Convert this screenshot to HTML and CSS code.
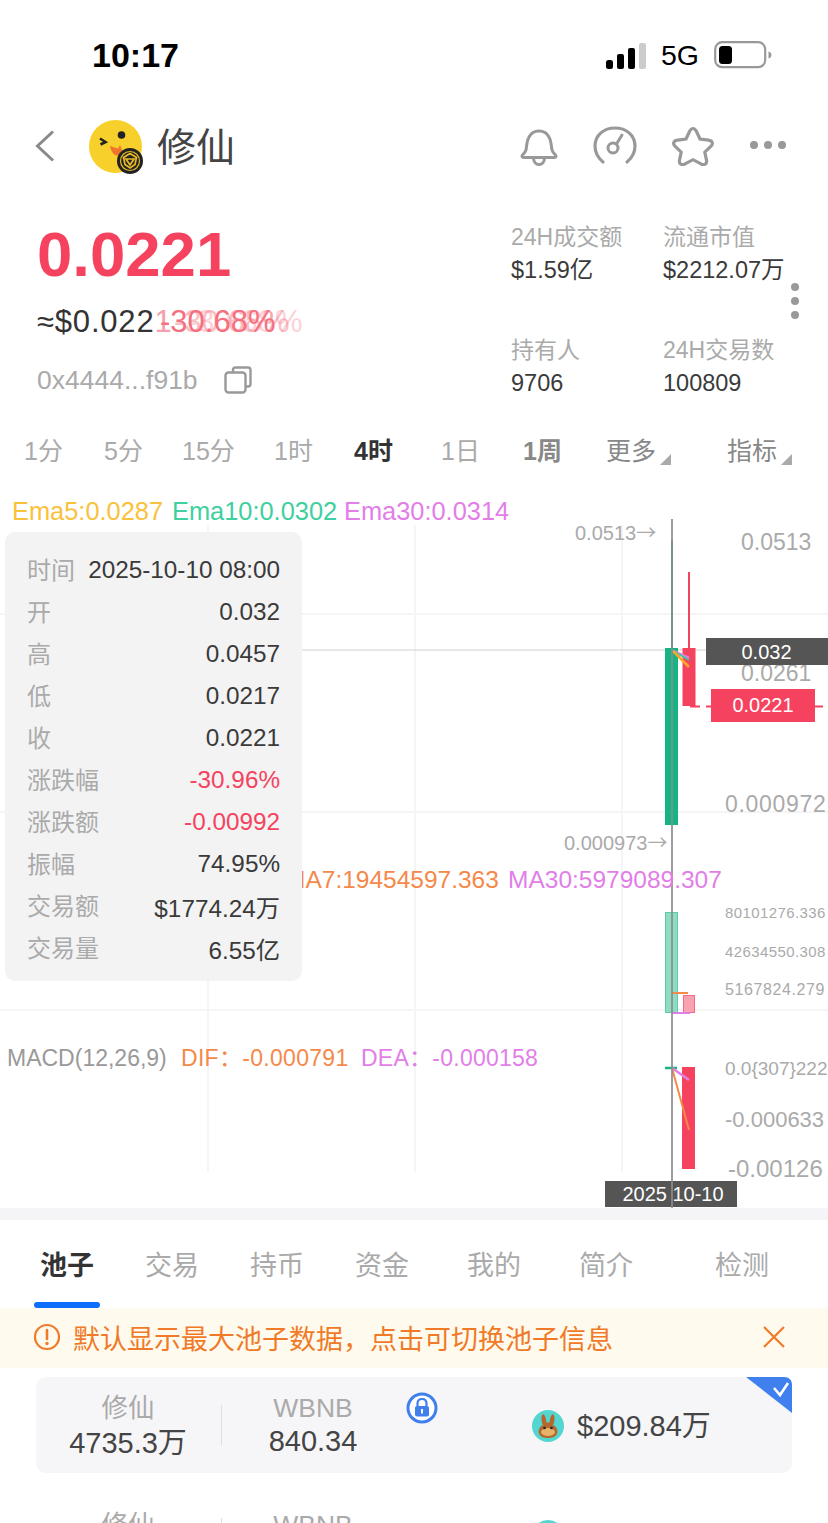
FILE: index.html
```html
<!DOCTYPE html>
<html lang="zh">
<head>
<meta charset="utf-8">
<title>修仙</title>
<link rel="stylesheet" href="styles.css">
</head>
<body>
<div class="page">
  <div class="status">
    <span class="time">10:17</span>
    <div class="status-right">
      <svg class="signal" viewBox="0 0 42 26" width="42" height="26"><rect x="0" y="17" width="7" height="9" rx="2.5" fill="#000"/><rect x="11" y="11" width="7" height="15" rx="2" fill="#000"/><rect x="22" y="5" width="7" height="21" rx="2" fill="#000"/><rect x="33" y="0" width="7" height="26" rx="2" fill="#ccc"/></svg>
      <span class="net">5G</span>
      <svg class="battery" viewBox="0 0 58 28" width="58" height="28"><rect x="1.2" y="1.2" width="50" height="25" rx="7" fill="#fff" stroke="#999" stroke-width="2.2"/><rect x="5" y="5" width="13" height="18" rx="3.5" fill="#000"/><path d="M54.5 10.5c2 .6 3 2 3 3.5s-1 3-3 3.500z" fill="#999"/></svg>
    </div>
  </div>

  <div class="nav">
    <svg class="back" viewBox="0 0 20 32" width="20" height="32"><path d="M18 1.500 2.500 16 18 30.500" fill="none" stroke="#8a8a8a" stroke-width="3"/></svg>
    <svg class="avatar" viewBox="0 0 54 54" width="54" height="54">
      <ellipse cx="26.500" cy="26.500" rx="26.500" ry="26.500" fill="#f8d02c"/>
      <circle cx="32.500" cy="15" r="3.800" fill="#222"/>
      <path d="M11 18.500l5.500 3.500-5 2.500" fill="none" stroke="#222" stroke-width="2.600"/>
      <path d="M21 26l8 2.500 2-3.500 2 5-4 5.500c-4 .5-7-4-8-9.500z" fill="#f0752a"/>
      <circle cx="41" cy="41" r="13" fill="#222"/>
      <circle cx="41" cy="41" r="9.500" fill="none" stroke="#e8b923" stroke-width="1.200"/>
      <path d="M41 33.500l6.500 4-1.500 7-5 3.500-5-3.500-1.500-7zM37 39h8l-4 6z" fill="none" stroke="#e8b923" stroke-width="1.700"/>
    </svg>
    <span class="title">修仙</span>
    <div class="nav-icons">
      <svg viewBox="0 0 40 40" width="40" height="40"><path d="M3 30c0-1 3-3 4-6 1-4 0-8 3-13 2-4 6-6 10-6s8 2 10 6c3 5 2 9 3 13 1 3 4 5 4 6 0 1-1 1.500-2 1.500H5c-1 0-2-.5-2-1.500z" fill="none" stroke="#999" stroke-width="3"/><path d="M14.500 32c0 4 2.500 6.500 5.500 6.500s5.500-2.500 5.500-6.500" fill="none" stroke="#999" stroke-width="3"/></svg>
      <svg viewBox="0 0 44 40" width="44" height="40"><path d="M10 36C4 31 2 26 2 20 2 9 11 2 22 2s20 7 20 18c0 6-2 11-8 16" fill="none" stroke="#999" stroke-width="3.200" stroke-linecap="round"/><circle cx="20" cy="22" r="5" fill="none" stroke="#999" stroke-width="3"/><path d="M23.500 18 29 9" stroke="#999" stroke-width="3" stroke-linecap="round"/></svg>
      <svg viewBox="0 0 44 40" width="44" height="40"><path d="M22 2.500c1.500 0 2.500 1 3.500 3l3.500 7.500 8.500 1.200c4 .6 5 3.500 2.500 6l-6.200 6 1.700 8c.7 3.500-2 5.500-5 4l-8.500-4.500-8.500 4.500c-3 1.500-5.700-.5-5-4l1.700-8-6.200-6c-2.500-2.500-1.500-5.400 2.500-6l8.500-1.200 3.500-7.500c1-2 2-3 3.500-3z" fill="none" stroke="#999" stroke-width="3.200"/></svg>
      <svg viewBox="0 0 38 10" width="38" height="10"><circle cx="5" cy="5" r="4" fill="#999"/><circle cx="19" cy="5" r="4" fill="#999"/><circle cx="33" cy="5" r="4" fill="#999"/></svg>
    </div>
  </div>

  <div class="summary">
    <div class="quote">
      <div class="price">0.0221</div>
      <div class="usd-row">
        <span class="usd">≈$0.022<span class="fade">1</span></span>
        <span class="change">-30.68%<span class="ghost ghost-a">-30.68%</span><span class="ghost ghost-b">-30.68%</span></span>
      </div>
      <div class="addr">
        <span>0x4444...f91b</span>
        <svg viewBox="0 0 28 28" width="28" height="28"><path d="M9 6V4c0-1.500 1-2.500 2.500-2.500H24c1.500 0 2.500 1 2.500 2.500v14c0 1.500-1 2.500-2.500 2.500h-2" fill="none" stroke="#999" stroke-width="2.400"/><rect x="1.500" y="6.500" width="20" height="20" rx="3" fill="none" stroke="#999" stroke-width="2.400"/></svg>
      </div>
    </div>
    <div class="stats">
      <div class="stat"><span class="stat-label">24H成交额</span><span class="stat-value">$1.59亿</span></div>
      <div class="stat"><span class="stat-label">流通市值</span><span class="stat-value">$2212.07万</span></div>
      <div class="stat"><span class="stat-label">持有人</span><span class="stat-value">9706</span></div>
      <div class="stat"><span class="stat-label">24H交易数</span><span class="stat-value">100809</span></div>
      <div class="vdots"><i></i><i></i><i></i></div>
    </div>
  </div>

  <div class="tf">
    <span>1分</span><span>5分</span><span>15分</span><span>1时</span>
    <span class="tf-on">4时</span><span>1日</span><span class="tf-mid">1周</span>
    <span class="tf-more">更多</span><span class="tf-more">指标</span>
  </div>

  <div class="chart">
    <svg class="plot" viewBox="0 490 828 718" width="828" height="718">
      <g stroke="#f5f5f6" stroke-width="2">
        <path d="M0 614H828M0 812H828M0 1010H828"/>
        <path d="M208 525V1172M415 525V1172M622 525V1172"/>
      </g>
      <path d="M302 650H706" stroke="#cfcfcf" stroke-width="1"/>
      <!-- candles -->
      <rect x="671" y="540" width="2" height="108" fill="#14b585"/>
      <rect x="665" y="648" width="13" height="177" fill="#14b585"/>
      <rect x="688" y="572" width="2" height="134" fill="#f5435f"/>
      <rect x="682.500" y="648" width="13" height="58" fill="#f5435f"/>
      <path d="M673 651 689 658" stroke="#e27ee8" stroke-width="2.500"/>
      <path d="M673 651 689 660" stroke="#3fc79a" stroke-width="2"/>
      <path d="M673 651 689 667" stroke="#f9a825" stroke-width="2.500"/>
      <path d="M690 706.500H700M706 706.500H711M815 706.500H823" stroke="#f5435f" stroke-width="2"/>
      <!-- volume -->
      <rect x="665.500" y="912.500" width="12" height="100" fill="#8fdcc4" stroke="#5ecba8"/>
      <rect x="683.500" y="995.500" width="11" height="17" fill="#f9a3b0" stroke="#f26a85"/>
      <path d="M672 993H688" stroke="#f5894a" stroke-width="2"/>
      <path d="M672 1013H690" stroke="#e27ee8" stroke-width="2"/>
      <!-- macd -->
      <rect x="682" y="1067" width="13" height="102" fill="#f5435f"/>
      <path d="M665 1068H677" stroke="#14b585" stroke-width="2.500"/>
      <path d="M672 1068 689 1080" stroke="#e27ee8" stroke-width="2.500"/>
      <path d="M672 1068 689 1130" stroke="#f5894a" stroke-width="2"/>
      <rect x="605" y="1181" width="132" height="26" fill="#555"/>
      <path d="M672 519V1208" stroke="#8c8c8c" stroke-opacity=".85" stroke-width="2"/>
    </svg>

    <span class="lbl ema ema5">Ema5:0.0287</span>
    <span class="lbl ema ema10">Ema10:0.0302</span>
    <span class="lbl ema ema30">Ema30:0.0314</span>

    <span class="lbl tick hi-mark">0.0513<span class="arrow">→</span></span>
    <span class="lbl tick lo-mark">0.000973<span class="arrow">→</span></span>
    <span class="lbl axis ax-a">0.0513</span>
    <span class="lbl axis ax-b">0.0261</span>
    <span class="lbl axis ax-c">0.000972</span>
    <span class="lbl tag tag-open">0.032</span>
    <span class="lbl tag tag-close">0.0221</span>

    <span class="lbl ma ma7">MA7:19454597.363</span>
    <span class="lbl ma ma30">MA30:5979089.307</span>
    <span class="lbl vol vol-a">80101276.336</span>
    <span class="lbl vol vol-b">42634550.308</span>
    <span class="lbl vol vol-c">5167824.279</span>

    <span class="lbl macd macd-name">MACD(12,26,9)</span>
    <span class="lbl macd macd-dif">DIF：-0.000791</span>
    <span class="lbl macd macd-dea">DEA：-0.000158</span>
    <span class="lbl axis m-a">0.0{307}222</span>
    <span class="lbl axis m-b">-0.000633</span>
    <span class="lbl axis m-c">-0.00126</span>
    <span class="lbl date">2025 10-10</span>

    <div class="tip">
      <div class="tip-row"><span>时间</span><b>2025-10-10 08:00</b></div>
      <div class="tip-row"><span>开</span><b>0.032</b></div>
      <div class="tip-row"><span>高</span><b>0.0457</b></div>
      <div class="tip-row"><span>低</span><b>0.0217</b></div>
      <div class="tip-row"><span>收</span><b>0.0221</b></div>
      <div class="tip-row"><span>涨跌幅</span><b class="neg">-30.96%</b></div>
      <div class="tip-row"><span>涨跌额</span><b class="neg">-0.00992</b></div>
      <div class="tip-row"><span>振幅</span><b>74.95%</b></div>
      <div class="tip-row"><span>交易额</span><b>$1774.24万</b></div>
      <div class="tip-row"><span>交易量</span><b>6.55亿</b></div>
    </div>
  </div>

  <div class="band"></div>

  <div class="tabs">
    <span class="tab-on">池子</span><span>交易</span><span>持币</span><span>资金</span><span>我的</span><span>简介</span><span>检测</span>
  </div>

  <div class="notice">
    <svg viewBox="0 0 28 28" width="28" height="28"><circle cx="14" cy="14" r="12" fill="none" stroke="#f07a28" stroke-width="2.200"/><path d="M14 7v9" stroke="#f07a28" stroke-width="2.600" stroke-linecap="round"/><circle cx="14" cy="20.500" r="1.700" fill="#f07a28"/></svg>
    <span class="notice-text">默认显示最大池子数据，点击可切换池子信息</span>
    <svg class="notice-x" viewBox="0 0 24 24" width="24" height="24"><path d="M2 2 22 22M22 2 2 22" stroke="#f07a28" stroke-width="2.200"/></svg>
  </div>

  <div class="pool pool-on">
    <div class="pool-col pool-a"><span class="pool-name">修仙</span><span class="pool-num">4735.3万</span></div>
    <div class="pool-div"></div>
    <div class="pool-col pool-b"><span class="pool-name">WBNB</span><span class="pool-num pool-num-b">840.34</span></div>
    <svg class="lock" viewBox="0 0 32 32" width="32" height="32"><circle cx="16" cy="16" r="14" fill="#fff" stroke="#3f7fee" stroke-width="3"/><path d="M11.500 14v-2.500c0-3 2-4.500 4.500-4.500s4.500 1.500 4.500 4.500V14" fill="none" stroke="#3f7fee" stroke-width="2.200"/><rect x="9" y="14" width="14" height="10.500" rx="2" fill="#3f7fee"/><rect x="15" y="17" width="2" height="4.500" fill="#fff"/></svg>
    <div class="pool-value">
      <svg viewBox="0 0 32 32" width="32" height="32"><circle cx="16" cy="16" r="16" fill="#53d6d0"/><path d="M11 15c-2-4-2-9-.5-10.500 2-1 3.500 3 4 8h3c.5-5 2-9 4-8 1.500 1.500 1.500 6.500-.5 10.500 3 1.500 4.500 4 4.500 6.500 0 4.500-4.500 6.500-9.500 6.500s-9.500-2-9.500-6.500c0-2.500 1.500-5 4.500-6.500z" fill="#b5682e"/><ellipse cx="16" cy="22" rx="7" ry="4" fill="#e8b26a"/><circle cx="12.500" cy="18" r="1.300" fill="#222"/><circle cx="19.500" cy="18" r="1.300" fill="#222"/></svg>
      <span>$209.84万</span>
    </div>
    <svg class="corner" viewBox="0 0 46 36" width="46" height="36"><path d="M0 0H38c5 0 8 3 8 8V36z" fill="#3f7fee"/><path d="M28 11l6 7 8-12" fill="none" stroke="#fff" stroke-width="2.600"/></svg>
  </div>

  <div class="pool pool-next">
    <div class="pool-col pool-a"><span class="pool-name">修仙</span></div>
    <div class="pool-div"></div>
    <div class="pool-col pool-b"><span class="pool-name">WBNB</span></div>
    <div class="pool-value pool-value-next"><svg viewBox="0 0 32 32" width="32" height="32"><circle cx="16" cy="16" r="16" fill="#53d6d0"/></svg></div>
  </div>
</div>
</body>
</html>
```
FILE: styles.css
```css
* { box-sizing: border-box; }
html, body { margin: 0; padding: 0; background: #fff; }
body { font-family: "Liberation Sans", "Noto Sans CJK SC", sans-serif; }
.page { width: 828px; height: 1523px; overflow: hidden; background: #fff; }

/* status bar */
.status { height: 110px; display: flex; align-items: center; padding: 0 56px 0 92px; justify-content: space-between; }
.time { font-size: 34px; font-weight: 700; color: #000; }
.status-right { display: flex; align-items: center; }
.signal { margin-right: 13px; margin-top: 2px; }
.net { font-size: 28.500px; color: #000; margin-right: 15px; }
.battery { display: block; }

/* nav */
.nav { height: 72px; display: flex; align-items: center; padding: 0 41px 0 35px; }
.back { margin-right: 34px; }
.avatar { margin-right: 14px; margin-top: 1px; }
.title { font-size: 39px; color: #444; margin-bottom: 4px; }
.nav-icons { margin-left: auto; display: flex; align-items: center; gap: 35px; }
.nav-icons svg:nth-child(2) { margin-left: -1px; }
.nav-icons svg:nth-child(3) { margin-left: -1px; }
.nav-icons svg:nth-child(4) { margin-left: -1px; margin-top: -2px; }

/* summary */
.summary { height: 232px; display: flex; justify-content: space-between; padding-left: 37px; position: relative; }
.quote { display: flex; flex-direction: column; }
.price { font-size: 63.500px; line-height: 72px; font-weight: 700; color: #f5435f; margin-top: 36px; }
.usd-row { display: flex; height: 40px; line-height: 40px; font-size: 31px; margin-top: 12px; }
.usd { color: #333; width: 123px; white-space: nowrap; letter-spacing: .8px; }
.fade { color: #f5a0ac; }
.change { position: relative; color: #f5707f; white-space: nowrap; }
.ghost { position: absolute; top: 0; left: 0; opacity: .45; }
.ghost-a { left: 14px; }
.ghost-b { left: 27px; opacity: .3; }
.addr { display: flex; align-items: center; margin-top: 23px; font-size: 26.500px; color: #aaa; gap: 25px; height: 30px; }
.addr span { width: 162px; white-space: nowrap; }
.stats { width: 317px; display: grid; grid-template-columns: 152px 152px; grid-auto-rows: 113px; padding-top: 41px; position: relative; }
.stat { display: flex; flex-direction: column; gap: 5px; white-space: nowrap; }
.stat-label { font-size: 23px; line-height: 28px; color: #aaa; }
.stat-value { font-size: 23.500px; line-height: 28px; color: #3a3a3a; }
.vdots { position: absolute; right: 29px; top: 101px; display: flex; flex-direction: column; gap: 6px; }
.vdots i { display: block; width: 8px; height: 8px; border-radius: 50%; background: #999; }

/* timeframe */
.tf { height: 76px; padding-bottom: 6px; display: grid; grid-template-columns: 80px 78px 92px 80px 87px 82px 83px 121px auto; align-items: center; padding-left: 24px; font-size: 25px; color: #aaa; }
.tf-on { color: #333; font-weight: 700; }
.tf-mid { color: #888; font-weight: 700; }
.tf-more { position: relative; color: #888; }
.tf-more::after { content: ""; position: absolute; left: 54px; bottom: 2px; border-style: solid; border-width: 0 0 11px 11px; border-color: transparent transparent #aaa transparent; }

/* chart: free canvas, every mark sits at its data position */
.chart { position: relative; height: 718px; overflow: hidden; }
.plot { position: absolute; left: 0; top: 0; display: block; }
.lbl { position: absolute; transform: translateY(-50%); white-space: nowrap; line-height: 1.2; }
.ema { font-size: 25.400px; top: 21px; }
.ema5 { left: 12px; color: #f9c23c; }
.ema10 { left: 172px; color: #3fd0a0; }
.ema30 { left: 344px; color: #e27ee8; }
.tick { font-size: 20px; color: #aaa; }
.arrow { font-family: "Noto Sans CJK SC", sans-serif; font-size: 20px; line-height: 1; }
.hi-mark { left: 575px; top: 43px; }
.lo-mark { left: 564px; top: 353px; }
.axis { color: #aaa; font-size: 23px; }
.ax-a { left: 741px; top: 53px; }
.ax-b { left: 741px; top: 184px; }
.ax-c { left: 725px; top: 315px; letter-spacing: .7px; }
.tag { color: #fff; font-size: 20px; text-align: center; transform: none; }
.tag-open { left: 706px; top: 148px; width: 122px; height: 27px; background: #555; line-height: 29px; padding-right: 1px; }
.tag-close { left: 711px; top: 199px; width: 104px; height: 33px; background: #f5435f; line-height: 33px; }
.ma { font-size: 24.500px; top: 390px; }
.ma7 { left: 285px; color: #f5894a; }
.ma30 { left: 508px; color: #e27ee8; }
.vol { font-size: 15px; color: #aaa; left: 725px; letter-spacing: .4px; }
.vol-a { top: 423px; }
.vol-b { top: 462px; }
.vol-c { top: 500px; font-size: 16px; letter-spacing: .6px; }
.macd { font-size: 23px; top: 569px; }
.macd-name { left: 7px; color: #999; }
.macd-dif { left: 181px; color: #f5894a; letter-spacing: .3px; }
.macd-dea { left: 361px; color: #e27ee8; letter-spacing: .25px; }
.m-a { left: 725px; top: 579px; font-size: 19px; }
.m-b { left: 725px; top: 630px; font-size: 22px; }
.m-c { left: 728px; top: 679px; font-size: 24px; }
.date { left: 605px; top: 704px; width: 136px; text-align: center; font-size: 20px; color: #fff; }
.tip { position: absolute; left: 5px; top: 42px; width: 297px; height: 449px; background: #f3f3f4; border-radius: 10px; padding: 17px 22px 0; }
.tip-row { height: 42px; display: flex; justify-content: space-between; align-items: center; font-size: 24px; }
.tip-row span { color: #aaa; margin-bottom: 4px; }
.tip-row b { font-weight: 400; color: #3a3a3a; font-size: 24.300px; }
.tip-row .neg { color: #f5435f; }

/* lower area */
.band { height: 12px; background: #f5f5f7; }
.tabs { height: 88px; display: grid; grid-template-columns: 105px 105px 105px 112px 112px 136px auto; align-items: center; padding: 0 0 2px 40px; font-size: 27px; color: #aaa; }
.tab-on { color: #333; font-weight: 700; position: relative; }
.tab-on::after { content: ""; position: absolute; left: -6px; top: 58px; width: 66px; height: 6px; border-radius: 3px; background: #0d6efd; }
.notice { height: 60px; background: #fffaee; display: flex; align-items: center; padding: 0 42px 2px 33px; gap: 12px; }
.notice-text { font-size: 27px; color: #f07a28; white-space: nowrap; }
.notice-x { margin-left: auto; }
.pool { margin: 9px 36px 0; height: 96px; border-radius: 10px; position: relative; display: flex; align-items: center; }
.pool-on { background: #f6f6f8; }
.pool-next { background: #fff; margin-top: 21px; align-items: flex-start; }
.pool-next .pool-div { top: 24px; }
.pool-col { position: absolute; top: 16px; display: flex; flex-direction: column; align-items: center; white-space: nowrap; }
.pool-a { left: 22px; width: 140px; }
.pool-b { left: 207px; width: 140px; }
.pool-name { font-size: 26.500px; line-height: 30px; color: #aaa; }
.pool-num { font-size: 29px; line-height: 30px; color: #444; margin-top: 5px; }
.pool-num-b { margin-top: 3px; }
.pool-div { position: absolute; left: 185px; top: 28px; width: 1px; height: 40px; background: #ddd; }
.lock { position: absolute; left: 370px; top: 15px; }
.pool-value { position: absolute; left: 496px; top: 33px; height: 32px; display: flex; align-items: center; gap: 13px; font-size: 29px; color: #444; white-space: nowrap; }
.pool-value span { margin-bottom: 6px; }
.pool-value-next { top: 26px; }
.corner { position: absolute; right: 0; top: 0; }
```
